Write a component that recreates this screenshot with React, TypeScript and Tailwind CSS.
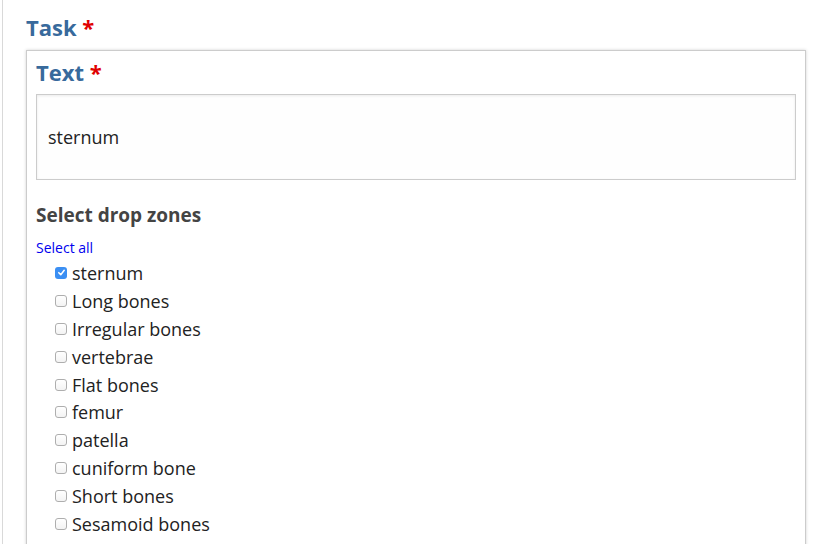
import React from "react";

const zones = [
  { label: "sternum", checked: true },
  { label: "Long bones", checked: false },
  { label: "Irregular bones", checked: false },
  { label: "vertebrae", checked: false },
  { label: "Flat bones", checked: false },
  { label: "femur", checked: false },
  { label: "patella", checked: false },
  { label: "cuniform bone", checked: false },
  { label: "Short bones", checked: false },
  { label: "Sesamoid bones", checked: false },
];

function Box({ checked }: { checked: boolean }) {
  if (checked) {
    return (
      <span className="flex h-[12px] w-[12px] shrink-0 items-center justify-center rounded-[3px] bg-[#3b8ff3]">
        <svg width="9" height="9" viewBox="0 0 10 10" fill="none">
          <path d="M2 5.2 L4.2 7.4 L8 2.6" stroke="white" strokeWidth="1.7" strokeLinecap="round" strokeLinejoin="round" />
        </svg>
      </span>
    );
  }
  return (
    <span className="block h-[12px] w-[12px] shrink-0 rounded-[3px] border border-[#aeaeae] bg-gradient-to-b from-white to-[#f3f3f3]" />
  );
}

export default function App() {
  return (
    <div
      className="relative h-[544px] w-[820px] overflow-hidden bg-white"
      style={{ fontFamily: '"Open Sans", "Noto Sans", sans-serif' }}
    >
      <div className="absolute left-[2px] top-0 h-full w-[1px] bg-[#d9d9d9]" />
      <div className="pl-[26px] pr-[14px] pt-[12px]">
        <div className="h-[30px] text-[22px] font-bold leading-[30px] text-[#386a9c]">
          Task <span className="text-[#e00000]">*</span>
        </div>
        <div className="mt-[8px] h-[520px] border border-[#cccccc] bg-white px-[9px] pt-[6px] shadow-[0_0_3px_rgba(0,0,0,0.18)]">
          <div className="h-[30px] text-[22px] font-bold leading-[30px] text-[#386a9c]">
            Text <span className="text-[#e00000]">*</span>
          </div>
          <div className="mt-[7px] flex h-[86px] items-center border border-[#cccccc] bg-[#fefefe] pl-[11px] text-[18px] text-[#222] shadow-[inset_0_1px_3px_rgba(0,0,0,0.08)]">
            sternum
          </div>
          <div className="mt-[22px] text-[19px] font-bold leading-[26px] text-[#444444]">
            Select drop zones
          </div>
          <div className="mt-[10px] text-[14px] leading-[20px] text-[#0000ee]">Select all</div>
          <div className="flex flex-col pl-[19px] pt-[1px]">
            {zones.map((z) => (
              <div key={z.label} className="flex h-[27.9px] items-center gap-[5px] text-[18px] text-[#222]">
                <Box checked={z.checked} />
                <span className="leading-[24px]">{z.label}</span>
              </div>
            ))}
          </div>
        </div>
      </div>
    </div>
  );
}
